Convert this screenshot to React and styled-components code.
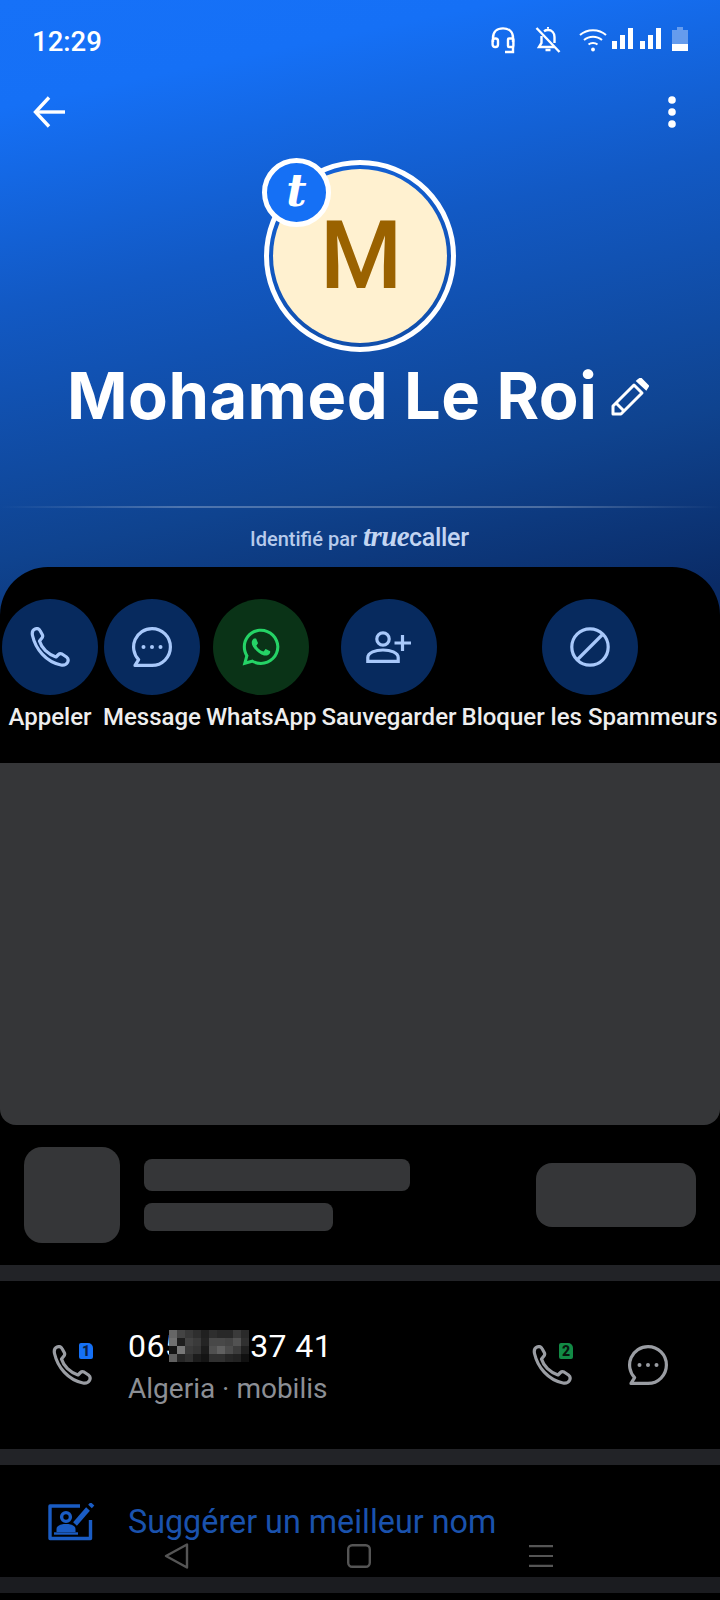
import React from 'react';
import styled, { createGlobalStyle } from 'styled-components';
import { FaWhatsapp } from 'react-icons/fa';

const GlobalStyle = createGlobalStyle`
  html, body {
    margin: 0;
    padding: 0;
    background: #000;
  }
  * {
    box-sizing: border-box;
  }
`;

const Screen = styled.div`
  position: relative;
  width: 720px;
  height: 1600px;
  overflow: hidden;
  background: #000;
  font-family: Roboto, "Liberation Sans", sans-serif;
`;

const Header = styled.header`
  height: 615px;
  background: linear-gradient(168deg, #1671f8 0%, #1570f6 14%, #1259c4 40%, #0f438f 73%, #0a2b66 96%);
  display: flex;
  flex-direction: column;
`;

const StatusBar = styled.div`
  height: 80px;
  padding: 26px 32px 0 32px;
  display: flex;
  justify-content: space-between;
  align-items: flex-start;
`;

const Clock = styled.span`
  color: #fff;
  font-size: 27.5px;
  font-weight: 500;
  line-height: 31px;
`;

const StatusIcons = styled.div`
  display: flex;
  align-items: flex-start;
  margin-top: 1px;
`;

const TopBar = styled.div`
  height: 60px;
  padding: 16px 44px 0 33px;
  display: flex;
  justify-content: space-between;
  align-items: flex-start;
`;

const AvatarWrap = styled.div`
  position: relative;
  width: 192px;
  height: 192px;
  margin: 20px 0 0 264px;
  flex-shrink: 0;
`;

const AvatarRing = styled.div`
  width: 192px;
  height: 192px;
  padding: 4px;
  border: 5px solid #fff;
  border-radius: 50%;
`;

const AvatarFace = styled.div`
  width: 100%;
  height: 100%;
  border-radius: 50%;
  background: #fff1d0;
  color: #9a6200;
  font-size: 94px;
  font-weight: 500;
  display: flex;
  align-items: center;
  justify-content: center;
  padding-left: 2px;
`;

const Badge = styled.div`
  position: absolute;
  left: -2px;
  top: -2px;
  width: 69px;
  height: 69px;
  border-radius: 50%;
  border: 5px solid #fff;
  background: #1570f5;
  color: #fff;
  font-family: "DejaVu Serif", serif;
  font-style: italic;
  font-weight: 700;
  font-size: 44px;
  display: flex;
  align-items: center;
  justify-content: center;
  line-height: 1;
  padding-bottom: 4px;
`;

const NameRow = styled.div`
  display: flex;
  align-items: flex-start;
  margin-top: 5px;
  padding-left: 67px;
  height: 93px;
`;

const Name = styled.h1`
  margin: 0;
  color: #fff;
  font-family: Inter, "Noto Sans", sans-serif;
  font-size: 65px;
  font-weight: 700;
  line-height: 78px;
  letter-spacing: 0.5px;
  white-space: nowrap;
`;

const EditIcon = styled.svg`
  margin: 21px 0 0 14px;
  flex-shrink: 0;
`;

const Rule = styled.div`
  height: 2px;
  margin-top: 56px;
  background: linear-gradient(90deg, rgba(255, 255, 255, 0), rgba(255, 255, 255, 0.26) 25%, rgba(255, 255, 255, 0.26) 75%, rgba(255, 255, 255, 0));
`;

const Identified = styled.div`
  margin-top: 13px;
  padding-left: 250px;
  display: flex;
  align-items: baseline;
  color: #b7cbec;
  font-size: 20px;
  font-weight: 500;
  line-height: 30px;
  white-space: nowrap;
`;

const BrandTrue = styled.span`
  margin-left: 6px;
  font-family: "Liberation Serif", serif;
  font-style: italic;
  font-weight: 700;
  font-size: 29px;
  letter-spacing: -0.6px;
  color: #c3d5f2;
`;

const BrandCaller = styled.span`
  font-size: 25px;
  font-weight: 500;
  letter-spacing: -0.3px;
  color: #c3d5f2;
`;

const Sheet = styled.main`
  position: relative;
  margin-top: -48px;
  border-radius: 48px 48px 0 0;
  background: #000;
  padding-top: 32px;
`;

const Actions = styled.div`
  height: 164px;
  padding-left: 2px;
  display: flex;
  gap: 5px;
`;

const Action = styled.div`
  display: flex;
  flex-direction: column;
  align-items: center;
  gap: 6px;
`;

const ActionCircle = styled.div`
  width: 96px;
  height: 96px;
  border-radius: 50%;
  background: ${(p) => (p.$green ? '#0a3317' : '#072a5e')};
  color: ${(p) => (p.$green ? '#25d366' : '#a8c8fa')};
  display: flex;
  align-items: center;
  justify-content: center;
`;

const ActionLabel = styled.span`
  color: #eeeeee;
  font-size: 24px;
  font-weight: 500;
  line-height: 32px;
  white-space: nowrap;
`;

const AdPanel = styled.div`
  height: 362px;
  background: #353638;
  border-radius: 0 0 16px 16px;
`;

const AdRow = styled.div`
  height: 140px;
  padding: 22px 24px 22px;
  display: flex;
  align-items: center;
`;

const Skeleton = styled.div`
  width: ${(p) => p.$w}px;
  height: ${(p) => p.$h}px;
  border-radius: ${(p) => p.$r}px;
  background: #353638;
  flex-shrink: 0;
`;

const SkeletonLines = styled.div`
  display: flex;
  flex-direction: column;
  gap: 12px;
  margin-left: 24px;
`;

const SkeletonButton = styled(Skeleton)`
  margin-left: auto;
`;

const Band = styled.div`
  height: 16px;
  background: ${(p) => (p.$dim ? '#1b1c20' : '#222327')};
`;

const NumberRow = styled.div`
  height: 168px;
  display: flex;
  align-items: flex-start;
  padding: 64px 52px 0 52px;
`;

const CallIcon = styled.div`
  position: relative;
  width: 40px;
  height: 40px;
  flex-shrink: 0;
  color: #9a9da3;
`;

const SimBadge = styled.span`
  position: absolute;
  left: 27px;
  top: -2px;
  width: 14px;
  height: 16px;
  border-radius: 2px 5px 2px 2px;
  background: ${(p) => (p.$sim === 2 ? '#128a45' : '#1570f5')};
  color: ${(p) => (p.$sim === 2 ? '#07140c' : '#0a1f45')};
  font-size: 14px;
  font-weight: 900;
  line-height: 16px;
  text-align: center;
`;

const NumberInfo = styled.div`
  margin: -19px 0 0 36px;
  flex: 1;
`;

const NumberLine = styled.div`
  display: flex;
  align-items: center;
  color: #fff;
  font-size: 32px;
  line-height: 40px;
  height: 40px;
  letter-spacing: 0.4px;
  white-space: nowrap;
`;

const Mosaic = styled.div`
  display: grid;
  grid-template-columns: repeat(10, 8px);
  grid-auto-rows: 8px;
  margin: 0 1px 0 -14px;
  position: relative;
`;

const MosaicCell = styled.i`
  display: block;
  background: ${(p) => p.$c};
`;

const NumberCarrier = styled.div`
  margin-top: 5px;
  color: #8c8f95;
  font-size: 28px;
  line-height: 36px;
  white-space: nowrap;
`;

const RowIcon = styled.div`
  width: 40px;
  height: 40px;
  color: #9a9da3;
  margin-left: ${(p) => p.$gap}px;
`;

const SuggestRow = styled.div`
  height: 112px;
  padding: 38px 0 0 48px;
  display: flex;
  align-items: flex-start;
  gap: 32px;
`;

const SuggestText = styled.span`
  color: #1a52ad;
  font-size: 32.3px;
  line-height: 36px;
  margin-top: 1px;
  white-space: nowrap;
`;

const NavBar = styled.nav`
  position: absolute;
  left: 164px;
  top: 1543px;
  width: 389px;
  height: 26px;
  display: flex;
  justify-content: space-between;
  align-items: center;
`;

const Phone = ({ size = 40 }) => (
  <svg width={size} height={size} viewBox="0 0 40 40" fill="none" stroke="currentColor" strokeWidth="3.2" strokeLinejoin="round">
    <path d="M2.5 8.5C1.8 5 2.5 3 5 2C7.5 1 9 1.6 10 3.5L12.5 8C13 9.5 12.6 10.5 11.5 11.5L9.5 14C11.5 21 18 27.5 26 30L28.5 27.5C29.5 26.5 30.5 26.3 32 27L36.5 30C38.5 31.5 38.5 33.5 37.5 35.5C36 38 33.5 38.5 31 38C16 35 5.5 22 2.5 8.5Z" />
  </svg>
);

const Bubble = () => (
  <svg width="40" height="40" viewBox="0 0 40 40" fill="none" stroke="currentColor" strokeWidth="3.2">
    <path d="M20 1.6A18.4 18.4 0 1 1 20 38.4H3L6.6 32.6A18.4 18.4 0 0 1 20 1.6Z" strokeLinejoin="round" />
    <circle cx="11.5" cy="20" r="2" fill="currentColor" stroke="none" />
    <circle cx="20" cy="20" r="2" fill="currentColor" stroke="none" />
    <circle cx="28.5" cy="20" r="2" fill="currentColor" stroke="none" />
  </svg>
);

const AddContact = () => (
  <svg width="46" height="32" viewBox="0 0 46 32" fill="none" stroke="currentColor" strokeWidth="3.2">
    <circle cx="17" cy="8" r="6.2" />
    <path d="M1.8 30.4V26.5C1.8 21.5 9.5 19 17 19S32.2 21.5 32.2 26.5V30.4Z" />
    <path d="M36.5 4V20M28.5 12H45" />
  </svg>
);

const Ban = () => (
  <svg width="40" height="40" viewBox="0 0 40 40" fill="none" stroke="currentColor" strokeWidth="3.2">
    <circle cx="20" cy="20" r="18.2" />
    <path d="M7 33L33 7" />
  </svg>
);

const HeadsetIcon = () => (
  <svg width="24" height="27" viewBox="0 0 24 27" fill="none" stroke="#fff" strokeWidth="2.4">
    <path d="M2 15V11C2 5 6 1.4 12 1.4S22 5 22 11V15" />
    <rect x="1.6" y="11.5" width="5.4" height="8.5" rx="2.4" />
    <rect x="17" y="11.5" width="5.4" height="8.5" rx="1" />
    <path d="M22 20V25H14" />
  </svg>
);

const BellOffIcon = () => (
  <svg width="26" height="26" viewBox="0 0 26 26" fill="none" stroke="#fff" strokeWidth="2.4" style={{ marginLeft: 20 }}>
    <path d="M1.5 1L24.5 25" />
    <path d="M6.5 9V16L4 20H19" />
    <path d="M9 4.2C10.2 3.4 11.5 3 13 3C16.8 3 19.5 6 19.5 10V16" />
    <path d="M12 0.5H14M10.5 23H15.5" />
  </svg>
);

const WifiIcon = () => (
  <svg width="28" height="25" viewBox="0 0 28 25" fill="none" stroke="#fff" strokeWidth="2" style={{ marginLeft: 18 }}>
    <path d="M1 8C8 1.5 20 1.5 27 8" />
    <path d="M5 13C10 8.5 18 8.5 23 13" />
    <path d="M9.5 17.5C12 15.5 16 15.5 18.5 17.5" />
    <circle cx="14" cy="22.5" r="1.9" fill="#fff" stroke="none" />
  </svg>
);

const SignalIcon = () => (
  <svg width="50" height="21" viewBox="0 0 50 21" fill="#fff" style={{ marginLeft: 5, marginTop: 1 }}>
    <rect x="0" y="13" width="5" height="8" />
    <rect x="8" y="7" width="5" height="14" />
    <rect x="16" y="0" width="5" height="21" />
    <rect x="28" y="13" width="5" height="8" />
    <rect x="36" y="7" width="5" height="14" />
    <rect x="44" y="0" width="5" height="21" />
  </svg>
);

const BatteryIcon = () => (
  <svg width="16" height="24" viewBox="0 0 16 24" style={{ marginLeft: 10 }}>
    <path d="M5 0H11V3H16V17H0V3H5Z" fill="#fff" fillOpacity="0.35" />
    <rect x="0" y="17" width="16" height="7" fill="#fff" />
  </svg>
);

const BackArrow = () => (
  <svg width="32" height="32" viewBox="0 0 32 32" fill="none" stroke="#fff" strokeWidth="3.4">
    <path d="M32 16H3" />
    <path d="M16 1.5L2.5 16L16 30.5" />
  </svg>
);

const Kebab = () => (
  <svg width="8" height="32" viewBox="0 0 8 32" fill="#fff">
    <circle cx="4" cy="4" r="3.8" />
    <circle cx="4" cy="16" r="3.8" />
    <circle cx="4" cy="28" r="3.8" />
  </svg>
);

const SuggestIcon = () => (
  <svg width="48" height="38" viewBox="0 0 48 38" fill="none" stroke="#1a5cc4" strokeWidth="3.4">
    <path d="M32 3H2V35.5H42.5V17" strokeLinejoin="round" />
    <circle cx="18" cy="14" r="4.4" />
    <path d="M8.5 29V26C8.5 22.5 13 21 18 21S27.5 22.5 27.5 26V29Z" fill="#1a5cc4" stroke="none" />
    <path d="M6 30.5H30" strokeWidth="2.4" />
    <path d="M27 21L40 6" strokeWidth="5" />
    <path d="M42 3.5L44.5 0.8" strokeWidth="5" />
  </svg>
);

const MOSAIC = [
  '66', '44', '38', '2e', '20', '2e', '28', '28', '3a', '2a',
  '70', '1e', '42', '3a', '24', '48', '48', '44', '52', '30',
  '14', '78', '3a', '34', '1c', '50', '60', '4c', '3c', '20',
  '60', '26', '30', '1c', '14', '30', '30', '26', '22', '10',
];

const ACTIONS = [
  { label: 'Appeler', icon: <Phone /> },
  { label: 'Message', icon: <Bubble /> },
  { label: 'WhatsApp', icon: <FaWhatsapp size={42} />, green: true },
  { label: 'Sauvegarder', icon: <AddContact /> },
  { label: 'Bloquer les Spammeurs', icon: <Ban /> },
];

export default function App() {
  return (
    <Screen>
      <GlobalStyle />
      <Header>
        <StatusBar>
          <Clock>12:29</Clock>
          <StatusIcons>
            <HeadsetIcon />
            <BellOffIcon />
            <WifiIcon />
            <SignalIcon />
            <BatteryIcon />
          </StatusIcons>
        </StatusBar>
        <TopBar>
          <BackArrow />
          <Kebab />
        </TopBar>
        <AvatarWrap>
          <AvatarRing>
            <AvatarFace>M</AvatarFace>
          </AvatarRing>
          <Badge>t</Badge>
        </AvatarWrap>
        <NameRow>
          <Name>Mohamed Le Roi</Name>
          <EditIcon width="38" height="38" viewBox="0 0 38 38" fill="none" stroke="#fff" strokeWidth="3">
            <path d="M2 36V28L23 7L31 15L10 36Z" strokeLinejoin="round" />
            <path d="M5 25L13 33" />
            <path d="M27 3L29.5 1L36.5 8L35 10.5Z" fill="#fff" />
          </EditIcon>
        </NameRow>
        <Rule />
        <Identified>
          Identifié par
          <BrandTrue>true</BrandTrue>
          <BrandCaller>caller</BrandCaller>
        </Identified>
      </Header>
      <Sheet>
        <Actions>
          {ACTIONS.map((a) => (
            <Action key={a.label}>
              <ActionCircle $green={a.green}>{a.icon}</ActionCircle>
              <ActionLabel>{a.label}</ActionLabel>
            </Action>
          ))}
        </Actions>
        <AdPanel />
        <AdRow>
          <Skeleton $w={96} $h={96} $r={18} />
          <SkeletonLines>
            <Skeleton $w={266} $h={32} $r={8} />
            <Skeleton $w={189} $h={28} $r={8} />
          </SkeletonLines>
          <SkeletonButton $w={160} $h={64} $r={16} />
        </AdRow>
        <Band />
        <NumberRow>
          <CallIcon>
            <Phone />
            <SimBadge $sim={1}>1</SimBadge>
          </CallIcon>
          <NumberInfo>
            <NumberLine>
              065
              <Mosaic>
                {MOSAIC.map((c, i) => (
                  <MosaicCell key={i} $c={`#${c}${c}${c}`} />
                ))}
              </Mosaic>
              37 41
            </NumberLine>
            <NumberCarrier>Algeria · mobilis</NumberCarrier>
          </NumberInfo>
          <CallIcon>
            <Phone />
            <SimBadge $sim={2}>2</SimBadge>
          </CallIcon>
          <RowIcon $gap={56}>
            <Bubble />
          </RowIcon>
        </NumberRow>
        <Band />
        <SuggestRow>
          <SuggestIcon />
          <SuggestText>Suggérer un meilleur nom</SuggestText>
        </SuggestRow>
        <Band $dim />
      </Sheet>
      <NavBar>
        <svg width="25" height="26" viewBox="0 0 25 26" fill="none" stroke="#555" strokeWidth="2.4" strokeLinejoin="round">
          <path d="M23 1.5V24.5L2 13Z" />
        </svg>
        <svg width="24" height="24" viewBox="0 0 24 24" fill="none" stroke="#555" strokeWidth="2.4">
          <rect x="1.2" y="1.2" width="21.6" height="21.6" rx="4" />
        </svg>
        <svg width="24" height="22" viewBox="0 0 24 22" fill="none" stroke="#555" strokeWidth="2.2">
          <path d="M0 1.1H24M0 11H24M0 20.9H24" />
        </svg>
      </NavBar>
    </Screen>
  );
}
